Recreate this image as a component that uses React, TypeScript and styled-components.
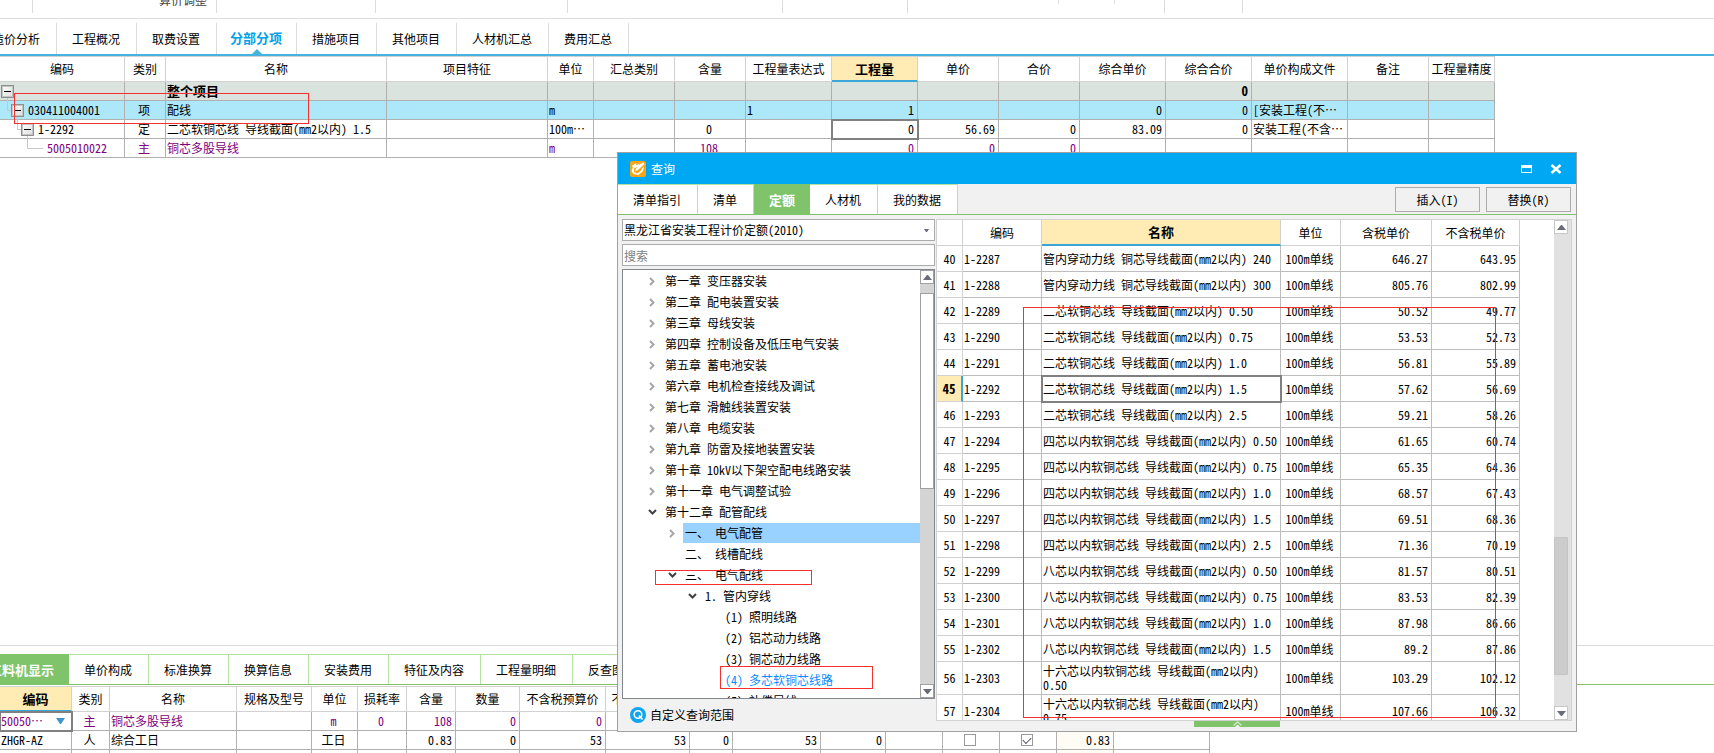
import React from "react";
import styled, { createGlobalStyle, css } from "styled-components";

const color = {
  line: "#b0b0b0",
  softLine: "#d2d2d2",
  sky: "#44b3e0",
  green: "#7fc36a",
  paleGreen: "#b5e3a1",
  yellow: "#ffebb3",
  purple: "#800080",
  panel: "#f1f1f1",
  focus: "#808080",
};

const GlobalStyle = createGlobalStyle`
  * { box-sizing: border-box; }
  body {
    margin: 0;
    background: #fff;
    color: #000;
    font-family: "Noto Sans CJK SC", sans-serif;
    font-size: 12px;
    line-height: 16px;
    font-feature-settings: "hwid";
  }
  button, input, select { font: inherit; color: inherit; }
  ul { list-style: none; margin: 0; padding: 0; }
`;

const Page = styled.div`
  position: relative;
  display: flex;
  flex-direction: column;
  height: 100vh;
  overflow: hidden;
`;

/* ---------- ribbon and module tabs ---------- */

const Ribbon = styled.div`
  display: flex;
  flex: none;
  height: 19px;
  border-bottom: 1px solid #dcdcdc;
  overflow: hidden;
`;

const RibbonGroup = styled.div<{ $width: number; $short?: boolean }>`
  display: flex;
  flex: none;
  justify-content: flex-end;
  align-items: flex-start;
  width: ${(p) => p.$width}px;
  height: ${(p) => (p.$short ? 4 : 13)}px;
  border-right: 1px solid #dcdcdc;
  overflow: hidden;
`;

const RibbonLabel = styled.span`
  margin: -8px 9px 0 0;
  color: #444;
`;

const ModuleTabs = styled.nav`
  display: flex;
  flex: none;
  height: 37px;
  padding-top: 4px;
  border-bottom: 2px solid ${color.sky};
`;

const ModuleTab = styled.button<{ $active?: boolean; $cut?: boolean }>`
  position: relative;
  flex: none;
  padding: 0 16px 0 15px;
  margin-left: ${(p) => (p.$cut ? -23 : 0)}px;
  border: 0;
  border-right: 1px solid #dcdcdc;
  background: #fff;
  white-space: nowrap;
  ${(p) =>
    p.$active &&
    css`
      padding: 0 14px 2px 13px;
      font-size: 13px;
      font-weight: 700;
      color: #00a2ec;
      &::after {
        content: "";
        position: absolute;
        left: 50%;
        bottom: 0;
        margin-left: -5px;
        border: 5px solid transparent;
        border-top: 0;
        border-bottom-color: ${color.sky};
      }
    `}
`;

/* ---------- data tables ---------- */

type Align = "left" | "center" | "right";

const Table = styled.table<{ $width: number }>`
  flex: none;
  width: ${(p) => p.$width}px;
  table-layout: fixed;
  border-collapse: separate;
  border-spacing: 0;
  white-space: pre;
`;

const HeadCell = styled.th<{ $active?: boolean; $tall?: boolean }>`
  height: ${(p) => (p.$tall ? 26 : 25)}px;
  padding: 0;
  border-right: 1px solid ${color.softLine};
  border-bottom: 1px solid ${color.softLine};
  font-weight: 400;
  overflow: hidden;
  ${(p) =>
    p.$active &&
    css`
      font-size: 13px;
      font-weight: 700;
      background: ${color.yellow};
      border-bottom: 2px solid #3aa5d8;
    `}
`;

const Cell = styled.td<{ $align?: Align; $focus?: boolean; $tint?: boolean }>`
  height: 19px;
  padding: 0 3px 0 1px;
  border-right: 1px solid ${color.line};
  border-bottom: 1px solid ${color.line};
  text-align: ${(p) => p.$align ?? "left"};
  overflow: hidden;
  background: ${(p) => (p.$tint ? "#fffcf6" : "transparent")};
  ${(p) =>
    p.$focus &&
    css`
      outline: 2px solid ${color.focus};
      outline-offset: -1px;
    `}
`;

const Row = styled.tr<{ $kind?: string }>`
  ${(p) =>
    p.$kind === "total" &&
    css`
      background: #dae3de;
      font-size: 13px;
      font-weight: 700;
    `}
  ${(p) => p.$kind === "selected" && css`background: #ade8fa;`}
  ${(p) => p.$kind === "material" && css`color: ${color.purple};`}
`;

const MainArea = styled.main`
  flex: 1;
  min-height: 0;
  overflow: hidden;
`;

const MainTable = styled(Table)`
  border-top: 1px solid ${color.softLine};
`;

const CodeCell = styled.td`
  height: 19px;
  padding: 0;
  border-right: 1px solid ${color.line};
  border-bottom: 1px solid ${color.line};
`;

const CodeInner = styled.div<{ $level: number }>`
  display: flex;
  align-items: center;
  height: 18px;
  padding-left: ${(p) => 1 + Math.max(0, p.$level - 1) * 10}px;
`;

const CodeText = styled.span`
  margin-left: 4px;
`;

const Expander = styled.button`
  flex: none;
  display: flex;
  align-items: center;
  justify-content: center;
  width: 13px;
  height: 13px;
  padding: 0;
  border: 1px solid #8e8f8f;
  box-shadow: inset 0 0 0 1px #c4c4c4;
  background: linear-gradient(135deg, #fff, #dcdcdc);
  &::before {
    content: "";
    width: 7px;
    height: 1px;
    background: #000;
  }
`;

const Elbow = styled.svg`
  flex: none;
  display: block;
  overflow: visible;
`;

const mainColumns: [string, number, Align][] = [
  ["编码", 125, "left"],
  ["类别", 41, "center"],
  ["名称", 221, "left"],
  ["项目特征", 161, "left"],
  ["单位", 46, "left"],
  ["汇总类别", 81, "left"],
  ["含量", 71, "center"],
  ["工程量表达式", 86, "left"],
  ["工程量", 86, "right"],
  ["单价", 81, "right"],
  ["合价", 81, "right"],
  ["综合单价", 86, "right"],
  ["综合合价", 86, "right"],
  ["单价构成文件", 96, "left"],
  ["备注", 81, "left"],
  ["工程量精度", 66, "left"],
];

const mainRows = [
  {
    kind: "total",
    code: "",
    cells: ["", "整个项目", "", "", "", "", "", "", "", "", "", "0", "", "", ""],
  },
  {
    kind: "selected",
    code: "030411004001",
    cells: ["项", "配线", "", "m", "", "", "1", "1", "", "", "0", "0", "[安装工程(不…", "", ""],
  },
  {
    kind: "plain",
    code: "1-2292",
    cells: ["定", "二芯软铜芯线 导线截面(mm2以内) 1.5", "", "100m…", "", "0", "", "0", "56.69", "0", "83.09", "0", "安装工程(不含…", "", ""],
  },
  {
    kind: "material",
    code: "5005010022",
    cells: ["主", "铜芯多股导线", "", "m", "", "108", "", "0", "0", "0", "", "", "", "", ""],
  },
];

function BillTable() {
  return (
    <MainTable $width={1495}>
      <colgroup>
        {mainColumns.map(([name, width]) => (
          <col key={name} width={width} />
        ))}
      </colgroup>
      <thead>
        <tr>
          {mainColumns.map(([name]) => (
            <HeadCell key={name} $active={name === "工程量"}>
              {name}
            </HeadCell>
          ))}
        </tr>
      </thead>
      <tbody>
        {mainRows.map((row, level) => {
          const isLeaf = level === 3;
          const elbow = isLeaf ? 22 : 10;
          return (
            <Row key={level} $kind={row.kind}>
              <CodeCell>
                <CodeInner $level={level}>
                  {level > 0 && (
                    <Elbow width={elbow} height={18}>
                      <path d={`M6.5 -3V9.5H${elbow}`} fill="none" stroke="#c8c8c8" />
                    </Elbow>
                  )}
                  {!isLeaf && <Expander aria-label="折叠" />}
                  <CodeText>{row.code}</CodeText>
                </CodeInner>
              </CodeCell>
              {row.cells.map((text, i) => (
                <Cell key={i} $align={mainColumns[i + 1][2]} $focus={level === 2 && i === 7}>
                  {text}
                </Cell>
              ))}
            </Row>
          );
        })}
      </tbody>
    </MainTable>
  );
}

/* ---------- lower panel ---------- */

const LowerPanel = styled.section`
  flex: none;
  height: 108px;
  padding-top: 8px;
  border-top: 1px solid #dcdcdc;
  overflow: hidden;
`;

const TabStrip = styled.nav`
  display: flex;
  height: 31px;
  border-bottom: 1px solid ${color.green};
`;

const StripTab = styled.button<{ $active?: boolean; $cut?: boolean }>`
  flex: none;
  padding: 0 16px 0 15px;
  margin-left: ${(p) => (p.$cut ? -26 : 0)}px;
  border: 0;
  border-top: 1px solid ${color.paleGreen};
  border-right: 1px solid ${color.paleGreen};
  background: #fff;
  white-space: nowrap;
  ${(p) =>
    p.$active &&
    css`
      padding: 0 14px 0 15px;
      font-size: 13px;
      font-weight: 700;
      color: #fff;
      background: ${color.green};
      border-color: ${color.green};
    `}
`;

const LowerTable = styled(Table)`
  margin-top: 1px;
  border-top: 1px solid ${color.softLine};
`;

const SelectBox = styled.div`
  position: relative;
  display: flex;
  align-items: center;
`;

const PlainSelect = styled.select`
  appearance: none;
  flex: 1;
  min-width: 0;
  height: 16px;
  padding: 0;
  border: 0;
  background: transparent;
  outline: 0;
`;

const SelectArrow = styled.svg<{ $right: number }>`
  position: absolute;
  right: ${(p) => p.$right}px;
  pointer-events: none;
`;

const Tick = styled.input`
  appearance: none;
  display: block;
  width: 12px;
  height: 12px;
  margin: 0 auto;
  border: 1px solid #999;
  background: #fff;
  &:checked::after {
    content: "";
    display: block;
    width: 7px;
    height: 4px;
    margin: 2px 0 0 1px;
    border-left: 1px solid #556;
    border-bottom: 1px solid #556;
    transform: rotate(-45deg);
  }
`;

const lowerColumns: [string, number, Align][] = [
  ["编码", 72, "left"],
  ["类别", 38, "center"],
  ["名称", 127, "left"],
  ["规格及型号", 75, "left"],
  ["单位", 46, "center"],
  ["损耗率", 49, "center"],
  ["含量", 49, "right"],
  ["数量", 64, "right"],
  ["不含税预算价", 86, "right"],
  ["不含税市场价", 84, "right"],
  ["", 43, "right"],
  ["", 88, "right"],
  ["", 65, "right"],
  ["", 57, "right"],
  ["", 57, "center"],
  ["", 57, "center"],
  ["", 57, "right"],
  ["", 96, "left"],
];

const laborRow = ["ZHGR-AZ", "人", "综合工日", "", "工日", "", "0.83", "0", "53", "53", "0", "53", "0", "", "off", "on", "0.83", ""];
const materialRow = ["主", "铜芯多股导线", "", "m", "0", "108", "0", "0", "", "", "", "", "", "", "", "", ""];
const lowerTabs = ["工料机显示", "单价构成", "标准换算", "换算信息", "安装费用", "特征及内容", "工程量明细", "反查图"];

function ResourcePanel() {
  return (
    <LowerPanel>
      <TabStrip>
        {lowerTabs.map((name, i) => (
          <StripTab key={name} $active={i === 0} $cut={i === 0}>
            {name}
          </StripTab>
        ))}
      </TabStrip>
      <LowerTable $width={1210}>
        <colgroup>
          {lowerColumns.map(([, width], i) => (
            <col key={i} width={width} />
          ))}
        </colgroup>
        <thead>
          <tr>
            {lowerColumns.map(([name], i) => (
              <HeadCell key={i} $active={i === 0}>
                {name}
              </HeadCell>
            ))}
          </tr>
        </thead>
        <tbody>
          <Row $kind="material">
            <Cell $focus>
              <SelectBox>
                <PlainSelect aria-label="编码">
                  <option>50050…</option>
                </PlainSelect>
                <SelectArrow $right={3} width="9" height="6">
                  <path d="M0 0H9L5 6H4Z" fill="#3f93d0" />
                </SelectArrow>
              </SelectBox>
            </Cell>
            {materialRow.map((text, i) => (
              <Cell key={i} $align={lowerColumns[i + 1][2]}>
                {text}
              </Cell>
            ))}
          </Row>
          <Row>
            {laborRow.map((text, i) => (
              <Cell key={i} $align={lowerColumns[i][2]} $tint={i === 16}>
                {i === 14 || i === 15 ? (
                  <Tick type="checkbox" aria-label="选项" defaultChecked={text === "on"} />
                ) : (
                  text
                )}
              </Cell>
            ))}
          </Row>
          <Row>
            {lowerColumns.map((_, i) => (
              <Cell key={i} $tint={i === 16} />
            ))}
          </Row>
        </tbody>
      </LowerTable>
    </LowerPanel>
  );
}

/* ---------- query dialog ---------- */

const Dialog = styled.section`
  position: absolute;
  left: 617px;
  top: 152px;
  display: flex;
  flex-direction: column;
  width: 960px;
  height: 580px;
  border: 1px solid #a0a0a0;
  background: ${color.panel};
`;

const TitleBar = styled.header`
  display: flex;
  flex: none;
  align-items: center;
  gap: 5px;
  height: 31px;
  padding: 0 14px 0 12px;
  background: #00a8f3;
  color: #fff;
`;

const Title = styled.h1`
  flex: 1;
  margin: 0;
  font-size: 12px;
  font-weight: 400;
`;

const WindowButton = styled.button`
  display: flex;
  margin-left: 13px;
  padding: 0;
  border: 0;
  background: none;
`;

const DialogTabs = styled(TabStrip)`
  flex: none;
  padding-right: 5px;
`;

const Actions = styled.div`
  display: flex;
  gap: 6px;
  margin-left: auto;
  padding: 3px 0 2px;
`;

const ActionButton = styled.button`
  width: 85px;
  padding: 0;
  border: 1px solid #acacac;
  background: ${color.panel};
`;

const DialogBody = styled.div`
  display: flex;
  flex: 1;
  gap: 1px;
  min-height: 0;
  padding: 4px 4px 0;
`;

const Sidebar = styled.aside`
  display: flex;
  flex: none;
  flex-direction: column;
  gap: 3px;
  width: 313px;
`;

const QuotaSelect = styled(SelectBox)`
  flex: none;
  height: 22px;
  padding: 0 1px;
  border: 1px solid #ababab;
  background: #fff;
`;

const SearchInput = styled.input`
  flex: none;
  height: 22px;
  padding: 0 1px;
  border: 1px solid #ababab;
  background: #fff;
  outline: 0;
  &::placeholder { color: #808080; opacity: 1; }
`;

const TreeBox = styled.div`
  display: flex;
  flex: 1;
  min-height: 0;
  border: 1px solid #828790;
  background: #fff;
`;

const TreeList = styled.ul`
  flex: 1;
  overflow: hidden;
  && { padding-top: 1px; }
`;

const TreeItem = styled.li<{ $level: number }>`
  display: flex;
  height: 21px;
  padding: 0 0 1px ${(p) => 20 + p.$level * 20}px;
`;

const Twisty = styled.span`
  display: flex;
  flex: none;
  align-items: center;
  justify-content: center;
  width: 20px;
  padding-right: 2px;
`;

const TreeLabel = styled.button<{ $selected?: boolean; $link?: boolean }>`
  flex: 1;
  padding: 0 2px;
  border: 0;
  text-align: left;
  white-space: pre;
  background: ${(p) => (p.$selected ? "#99d1ff" : "transparent")};
  color: ${(p) => (p.$link ? "#0a8cff" : "inherit")};
`;

const TreeScroll = styled.div`
  display: flex;
  flex: none;
  flex-direction: column;
  width: 14px;
  background: #d4d4d4;
`;

const ScrollButton = styled.button<{ $line: string }>`
  display: flex;
  flex: none;
  align-items: center;
  justify-content: center;
  height: 14px;
  padding: 0;
  border: 1px solid ${(p) => p.$line};
  background: #fff;
`;

const TreeThumb = styled.div`
  height: 196px;
  margin: 9px 0 auto;
  border: 1px solid #a0a0a0;
  background: #fff;
`;

const ScopeButton = styled.button`
  display: flex;
  flex: none;
  align-items: center;
  gap: 4px;
  height: 25px;
  margin-bottom: 4px;
  padding: 0 0 0 8px;
  border: 0;
  background: none;
`;

const Results = styled.div`
  display: flex;
  flex: 1;
  flex-direction: column;
  min-width: 0;
`;

const GridFrame = styled.div`
  display: flex;
  flex: 1;
  min-height: 0;
  border: 1px solid ${color.softLine};
  background: #fff;
`;

const GridView = styled.div`
  flex: 1;
  overflow: hidden;
`;

const GridScroll = styled.div`
  display: flex;
  flex: none;
  flex-direction: column;
  width: 17px;
  padding-right: 3px;
  background: #e1e1e1;
`;

const GridThumb = styled.div`
  height: 138px;
  margin: auto 0 31px;
  border: 1px solid #c4c4c4;
  border-radius: 1px;
  background: #cccccc;
`;

const GridFooter = styled.div`
  flex: none;
  height: 10px;
  padding-left: 258px;
`;

const PullUp = styled.button`
  display: flex;
  justify-content: center;
  width: 86px;
  height: 6px;
  padding: 0;
  border: 0;
  background: ${color.green};
`;

const ResultCell = styled(Cell)`
  height: 26px;
  border-color: #bdbdbd;
  line-height: 14px;
`;

const NumberCell = styled.th<{ $active?: boolean }>`
  padding: 0;
  border-right: 1px solid ${color.softLine};
  border-bottom: 1px solid ${color.softLine};
  font-weight: 400;
  line-height: 14px;
  ${(p) =>
    p.$active &&
    css`
      font-size: 13px;
      font-weight: 700;
      background: ${color.yellow};
      border-right: 2px solid #3aa5d8;
    `}
`;

const Highlight = styled.div<{ $x: number; $y: number; $w: number; $h: number }>`
  position: absolute;
  left: ${(p) => p.$x}px;
  top: ${(p) => p.$y}px;
  width: ${(p) => p.$w}px;
  height: ${(p) => p.$h}px;
  border: 1px solid #f5302e;
  pointer-events: none;
`;

const treeNodes: [number, string, string][] = [
  [0, "closed", "第一章 变压器安装"],
  [0, "closed", "第二章 配电装置安装"],
  [0, "closed", "第三章 母线安装"],
  [0, "closed", "第四章 控制设备及低压电气安装"],
  [0, "closed", "第五章 蓄电池安装"],
  [0, "closed", "第六章 电机检查接线及调试"],
  [0, "closed", "第七章 滑触线装置安装"],
  [0, "closed", "第八章 电缆安装"],
  [0, "closed", "第九章 防雷及接地装置安装"],
  [0, "closed", "第十章 10kV以下架空配电线路安装"],
  [0, "closed", "第十一章 电气调整试验"],
  [0, "open", "第十二章 配管配线"],
  [1, "closed", "一、 电气配管"],
  [1, "", "二、 线槽配线"],
  [1, "open", "三、 电气配线"],
  [2, "open", "1. 管内穿线"],
  [3, "", "(1) 照明线路"],
  [3, "", "(2) 铝芯动力线路"],
  [3, "", "(3) 铜芯动力线路"],
  [3, "", "(4) 多芯软铜芯线路"],
  [3, "", "(5) 补偿导线"],
];

const resultColumns: [string, number][] = [
  ["", 26],
  ["编码", 79],
  ["名称", 239],
  ["单位", 60],
  ["含税单价", 91],
  ["不含税单价", 88],
];

const results: [string, string, string][] = [
  ["管内穿动力线 铜芯导线截面(mm2以内) 240", "646.27", "643.95"],
  ["管内穿动力线 铜芯导线截面(mm2以内) 300", "805.76", "802.99"],
  ["二芯软铜芯线 导线截面(mm2以内) 0.50", "50.52", "49.77"],
  ["二芯软铜芯线 导线截面(mm2以内) 0.75", "53.53", "52.73"],
  ["二芯软铜芯线 导线截面(mm2以内) 1.0", "56.81", "55.89"],
  ["二芯软铜芯线 导线截面(mm2以内) 1.5", "57.62", "56.69"],
  ["二芯软铜芯线 导线截面(mm2以内) 2.5", "59.21", "58.26"],
  ["四芯以内软铜芯线 导线截面(mm2以内) 0.50", "61.65", "60.74"],
  ["四芯以内软铜芯线 导线截面(mm2以内) 0.75", "65.35", "64.36"],
  ["四芯以内软铜芯线 导线截面(mm2以内) 1.0", "68.57", "67.43"],
  ["四芯以内软铜芯线 导线截面(mm2以内) 1.5", "69.51", "68.36"],
  ["四芯以内软铜芯线 导线截面(mm2以内) 2.5", "71.36", "70.19"],
  ["八芯以内软铜芯线 导线截面(mm2以内) 0.50", "81.57", "80.51"],
  ["八芯以内软铜芯线 导线截面(mm2以内) 0.75", "83.53", "82.39"],
  ["八芯以内软铜芯线 导线截面(mm2以内) 1.0", "87.98", "86.66"],
  ["八芯以内软铜芯线 导线截面(mm2以内) 1.5", "89.2", "87.86"],
  ["十六芯以内软铜芯线 导线截面(mm2以内)\n0.50", "103.29", "102.12"],
  ["十六芯以内软铜芯线 导线截面(mm2以内)\n0.75", "107.66", "106.32"],
];

const ResultRow = styled.tr<{ $tall: boolean }>`
  height: ${(p) => (p.$tall ? 33 : 26)}px;
`;

function Chevron({ open }: { open: boolean }) {
  return open ? (
    <svg width="9" height="6">
      <path d="M1 1L4.500 4.500L8 1" fill="none" stroke="#404040" strokeWidth="2" />
    </svg>
  ) : (
    <svg width="6" height="9">
      <path d="M1 1L4.500 4.500L1 8" fill="none" stroke="#a6a6a6" strokeWidth="2" />
    </svg>
  );
}

function Triangle({ up }: { up?: boolean }) {
  return (
    <svg width="9" height="5">
      <path d={up ? "M0 5H9L5 0H4Z" : "M0 0H9L5 5H4Z"} fill="#686c78" />
    </svg>
  );
}

function QueryDialog() {
  return (
    <Dialog role="dialog" aria-label="查询">
      <TitleBar>
        <svg width="16" height="16" viewBox="0 0 16 16">
          <rect width="16" height="16" rx="2" fill="#f9a51a" />
          <path d="M2 4.500L6.500 2L6 4.200L9.500 2.800L9 4L13 1.500L14.500 3L8.500 8.500L5 10.500L6 7.500L8.500 5.500L4 7.500V11L7 12.500L11 9.800L12 7.500L14 5.500L13 10L8.500 14L3.500 13L1.500 10L2.800 6.500Z" fill="#fff" />
        </svg>
        <Title>查询</Title>
        <WindowButton aria-label="最大化">
          <svg width="11" height="8">
            <path d="M0.500 1H10.500V7.500H0.500Z" fill="none" stroke="#fff" />
            <path d="M0 0H11V3H0Z" fill="#fff" />
          </svg>
        </WindowButton>
        <WindowButton aria-label="关闭">
          <svg width="12" height="10">
            <path d="M1.500 1L10.500 9M10.500 1L1.500 9" stroke="#fff" strokeWidth="2.400" />
          </svg>
        </WindowButton>
      </TitleBar>
      <DialogTabs>
        {["清单指引", "清单", "定额", "人材机", "我的数据"].map((name) => (
          <StripTab key={name} $active={name === "定额"}>
            {name}
          </StripTab>
        ))}
        <Actions>
          <ActionButton>插入(I)</ActionButton>
          <ActionButton>替换(R)</ActionButton>
        </Actions>
      </DialogTabs>
      <DialogBody>
        <Sidebar>
          <QuotaSelect>
            <PlainSelect aria-label="定额库">
              <option>黑龙江省安装工程计价定额(2010)</option>
            </PlainSelect>
            <SelectArrow $right={5} width="5" height="3">
              <path d="M0 0H5L3 3H2Z" fill="#686c78" />
            </SelectArrow>
          </QuotaSelect>
          <SearchInput placeholder="搜索" aria-label="搜索" />
          <TreeBox>
            <TreeList>
              {treeNodes.map(([level, state, label], i) => (
                <TreeItem key={label} $level={level}>
                  <Twisty>{state && <Chevron open={state === "open"} />}</Twisty>
                  <TreeLabel $selected={i === 12} $link={i === 19}>
                    {label}
                  </TreeLabel>
                </TreeItem>
              ))}
            </TreeList>
            <TreeScroll>
              <ScrollButton $line="#a0a0a0" aria-label="向上滚动">
                <Triangle up />
              </ScrollButton>
              <TreeThumb />
              <ScrollButton $line="#a0a0a0" aria-label="向下滚动">
                <Triangle />
              </ScrollButton>
            </TreeScroll>
          </TreeBox>
          <ScopeButton>
            <svg width="16" height="16" viewBox="0 0 16 16">
              <circle cx="8" cy="8" r="8" fill="#10a5ee" />
              <circle cx="8" cy="7.500" r="3.800" fill="none" stroke="#fff" strokeWidth="1.500" />
              <path d="M9 8.500L12.500 12.500" stroke="#fff" strokeWidth="1.800" />
            </svg>
            自定义查询范围
          </ScopeButton>
        </Sidebar>
        <Results>
          <GridFrame>
            <GridView>
              <Table $width={583}>
                <colgroup>
                  {resultColumns.map(([name, width]) => (
                    <col key={name} width={width} />
                  ))}
                </colgroup>
                <thead>
                  <tr>
                    {resultColumns.map(([name]) => (
                      <HeadCell key={name} $tall $active={name === "名称"}>
                        {name}
                      </HeadCell>
                    ))}
                  </tr>
                </thead>
                <tbody>
                  {results.map(([name, taxed, untaxed], i) => (
                    <ResultRow key={name} $tall={i > 15}>
                      <NumberCell scope="row" $active={i === 5}>
                        {40 + i}
                      </NumberCell>
                      <ResultCell>{`1-${2287 + i}`}</ResultCell>
                      <ResultCell $focus={i === 5}>{name}</ResultCell>
                      <ResultCell $align="center">100m单线</ResultCell>
                      <ResultCell $align="right">{taxed}</ResultCell>
                      <ResultCell $align="right">{untaxed}</ResultCell>
                    </ResultRow>
                  ))}
                </tbody>
              </Table>
            </GridView>
            <GridScroll>
              <ScrollButton $line="#c8c8c8" aria-label="向上滚动">
                <Triangle up />
              </ScrollButton>
              <GridThumb />
              <ScrollButton $line="#c8c8c8" aria-label="向下滚动">
                <Triangle />
              </ScrollButton>
            </GridScroll>
          </GridFrame>
          <GridFooter>
            <PullUp aria-label="展开">
              <svg width="9" height="6">
                <path d="M0.500 4.500L4.500 0.800L8.500 4.500" fill="none" stroke="#d6efcc" strokeWidth="1.200" />
                <path d="M2 6L4.500 3.500L7 6Z" fill="#fff" />
              </svg>
            </PullUp>
          </GridFooter>
        </Results>
      </DialogBody>
      <Highlight $x={37} $y={417} $w={157} $h={15} />
      <Highlight $x={102} $y={513} $w={153} $h={23} />
      <Highlight $x={405} $y={154} $w={473} $h={411} />
    </Dialog>
  );
}

/* ---------- page ---------- */

const ribbonGroups = [33, 184, 159, 192, 215, 125, 151, 56, 50, 78];
const moduleTabs = ["造价分析", "工程概况", "取费设置", "分部分项", "措施项目", "其他项目", "人材机汇总", "费用汇总"];

export default function App() {
  return (
    <Page lang="zh-CN">
      <GlobalStyle />
      <Ribbon>
        {ribbonGroups.map((width, i) => (
          <RibbonGroup key={i} $width={width} $short={i === 6 || i === 7}>
            {i === 1 && <RibbonLabel>算价调整</RibbonLabel>}
          </RibbonGroup>
        ))}
      </Ribbon>
      <ModuleTabs>
        {moduleTabs.map((name, i) => (
          <ModuleTab key={name} $active={name === "分部分项"} $cut={i === 0}>
            {name}
          </ModuleTab>
        ))}
      </ModuleTabs>
      <MainArea>
        <BillTable />
      </MainArea>
      <ResourcePanel />
      <Highlight $x={14} $y={93} $w={295} $h={31} />
      <QueryDialog />
    </Page>
  );
}
